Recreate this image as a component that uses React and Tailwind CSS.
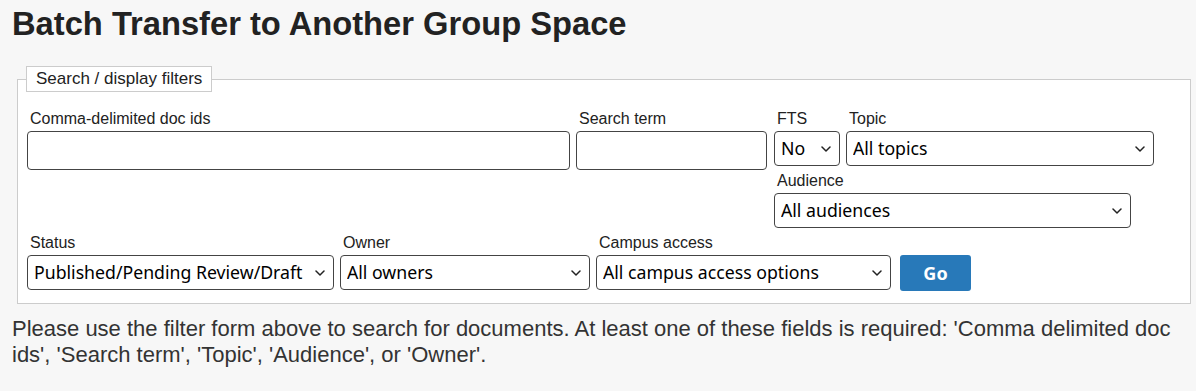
import React from 'react';

const labelCls = "block pl-[3px] mb-[3px] text-[16px] leading-[18px] text-[#222]";
const ctrlFont = { fontFamily: '"Noto Sans", "Open Sans", sans-serif' };

function Chevron() {
  return (
    <svg className="pointer-events-none absolute right-[9px] top-1/2 -translate-y-1/2" width="10" height="6" viewBox="0 0 10 6" fill="none">
      <path d="M1 1l4 4 4-4" stroke="#222" strokeWidth="1.5" strokeLinecap="round" strokeLinejoin="round" />
    </svg>
  );
}

function Select({ value, className = "" }) {
  return (
    <div className={`relative ${className}`}>
      <select
        defaultValue={value}
        style={ctrlFont}
        className="appearance-none w-full h-[35px] rounded-[4px] border border-[#444] bg-white pl-[6px] pr-[24px] text-[17.7px] text-black outline-none"
      >
        <option>{value}</option>
      </select>
      <Chevron />
    </div>
  );
}

function Field({ label, className = "", children }) {
  return (
    <div className={`mb-[6px] ${className}`}>
      <label className={labelCls}>{label}</label>
      {children}
    </div>
  );
}

export default function App() {
  return (
    <div className="min-h-screen bg-[#f7f7f7] px-[12px] pt-[4px] pb-4 text-[#222]" style={{ fontFamily: '"Liberation Sans", Arial, sans-serif' }}>
      <h1 className="text-[32.7px] leading-[40px] font-bold text-[#222]">Batch Transfer to Another Group Space</h1>

      <fieldset className="mt-[22px] ml-[5px] w-[1174px] border border-[#ccc] bg-white px-[9px] pb-[7px]">
        <legend className="-ml-px border border-[#ccc] bg-white px-[9px] text-[17px] leading-[24px] text-[#222]">
          Search / display filters
        </legend>

        <div className="pt-[18px]">
          {/* Row 1 */}
          <div className="flex items-start">
            <Field label="Comma-delimited doc ids" className="w-[543px]">
              <input type="text" className="block w-full h-[39px] rounded-[4px] border border-[#444] bg-white" />
            </Field>
            <Field label="Search term" className="ml-[6px] w-[191px]">
              <input type="text" className="block w-full h-[39px] rounded-[4px] border border-[#444] bg-white" />
            </Field>
            <div className="ml-[7px] flex flex-col">
              <div className="flex">
                <Field label="FTS" className="w-[66px]">
                  <Select value="No" />
                </Field>
                <Field label="Topic" className="ml-[6px] w-[308px]">
                  <Select value="All topics" />
                </Field>
              </div>
              <Field label="Audience" className="w-[357px]">
                <Select value="All audiences" />
              </Field>
            </div>
          </div>

          {/* Row 2 */}
          <div className="flex items-end">
            <Field label="Status" className="w-[307px]">
              <Select value="Published/Pending Review/Draft" />
            </Field>
            <Field label="Owner" className="ml-[6px] w-[250px]">
              <Select value="All owners" />
            </Field>
            <Field label="Campus access" className="ml-[6px] w-[295px]">
              <Select value="All campus access options" />
            </Field>
            <button
              style={ctrlFont}
              className="ml-[9px] mb-[5px] w-[71px] h-[36px] rounded-[3px] bg-[#2879b9] text-white text-[18px] font-bold"
            >
              Go
            </button>
          </div>
        </div>
      </fieldset>

      <p className="mt-[12px] text-[22px] leading-[26px] text-[#333] pr-[8px]">
        Please use the filter form above to search for documents. At least one of these fields is required: 'Comma delimited doc ids', 'Search term', 'Topic', 'Audience', or 'Owner'.
      </p>
    </div>
  );
}
